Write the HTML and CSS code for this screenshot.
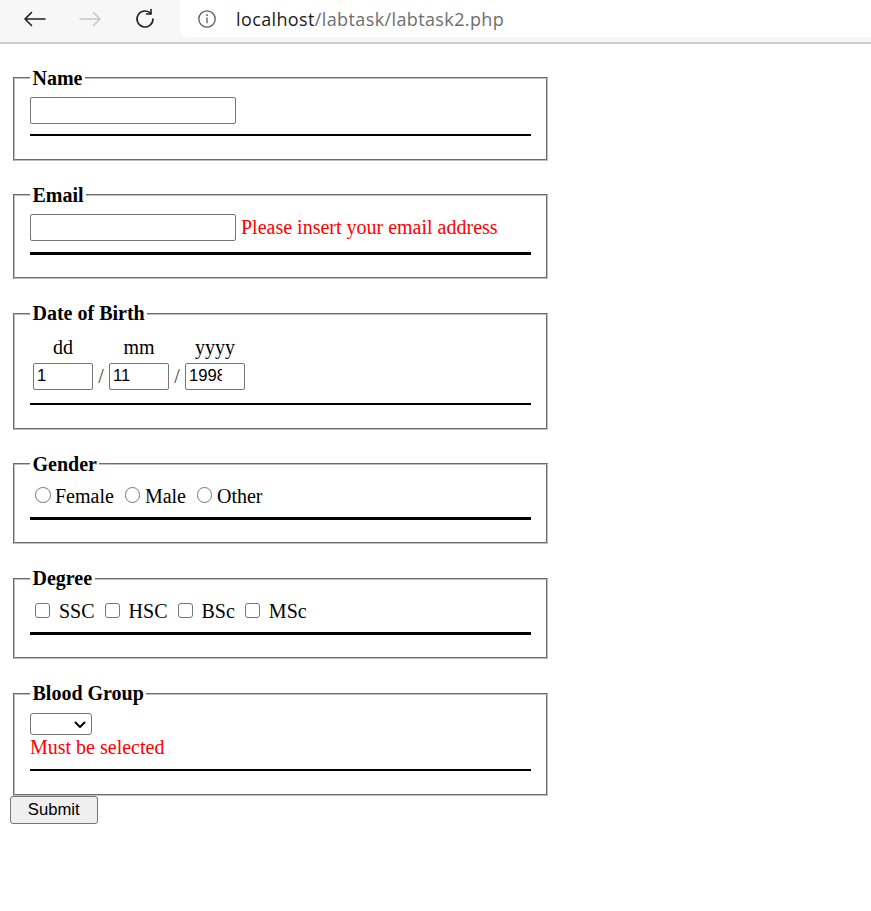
FILE: index.html
```html
<!DOCTYPE html>
<html lang="en">
<head>
<meta charset="utf-8">
<title>labtask2</title>
<link rel="stylesheet" href="styles.css">
</head>
<body>
<header class="browser-bar">
  <nav class="nav-buttons">
    <span class="nav-btn">
      <svg width="24" height="24" viewBox="0 0 24 24" class="icon icon-dark"><path d="M22 12H2M8.5 5.5L2 12l6.5 6.5"/></svg>
    </span>
    <span class="nav-btn">
      <svg width="24" height="24" viewBox="0 0 24 24" class="icon icon-light"><path d="M2 12h20M15.5 5.5L22 12l-6.5 6.5"/></svg>
    </span>
    <span class="nav-btn">
      <svg width="24" height="24" viewBox="0 0 24 24" class="icon icon-dark"><path d="M17.8 6.5A8 8 0 1 0 20 12"/><path d="M18 2.5V7h-4.5"/></svg>
    </span>
  </nav>
  <div class="address">
    <svg width="20" height="20" viewBox="0 0 20 20" class="info-icon"><circle cx="10" cy="10" r="8.2"/><path d="M10 8.6v5.6"/><circle cx="10" cy="6.2" r="0.9" class="info-dot"/></svg>
    <span class="url"><span class="url-host">localhost</span><span class="url-path">/labtask/labtask2.php</span></span>
  </div>
</header>

<main class="page">
  <form class="form" action="#" method="post">
    <fieldset class="group">
      <legend class="group-title">Name</legend>
      <div class="field-row">
        <input type="text" class="text-input" name="name">
      </div>
      <hr class="rule">
    </fieldset>

    <fieldset class="group">
      <legend class="group-title">Email</legend>
      <div class="field-row field-row-message">
        <input type="text" class="text-input" name="email">
        <span class="error">Please insert your email address</span>
      </div>
      <hr class="rule">
    </fieldset>

    <fieldset class="group">
      <legend class="group-title">Date of Birth</legend>
      <div class="dob">
        <span class="dob-label">dd</span>
        <span></span>
        <span class="dob-label">mm</span>
        <span></span>
        <span class="dob-label">yyyy</span>
        <input type="text" class="dob-input" value="1">
        <span class="dob-sep">/</span>
        <input type="text" class="dob-input" value="11">
        <span class="dob-sep">/</span>
        <input type="text" class="dob-input dob-year" value="1998">
      </div>
      <hr class="rule">
    </fieldset>

    <fieldset class="group">
      <legend class="group-title">Gender</legend>
      <div class="choices choices-radio">
        <label class="choice"><input type="radio" class="radio" name="gender">Female</label>
        <label class="choice"><input type="radio" class="radio" name="gender">Male</label>
        <label class="choice"><input type="radio" class="radio" name="gender">Other</label>
      </div>
      <hr class="rule">
    </fieldset>

    <fieldset class="group">
      <legend class="group-title">Degree</legend>
      <div class="choices">
        <label class="choice"><input type="checkbox" class="checkbox"> SSC</label>
        <label class="choice"><input type="checkbox" class="checkbox"> HSC</label>
        <label class="choice"><input type="checkbox" class="checkbox"> BSc</label>
        <label class="choice"><input type="checkbox" class="checkbox"> MSc</label>
      </div>
      <hr class="rule">
    </fieldset>

    <fieldset class="group group-last">
      <legend class="group-title">Blood Group</legend>
      <div class="select-wrap">
        <select class="select" name="blood">
          <option value=""></option>
        </select>
        <svg width="12" height="7" viewBox="0 0 12 7" class="select-arrow"><path d="M1 1l5 5 5-5"/></svg>
      </div>
      <div class="error">Must be selected</div>
      <hr class="rule">
    </fieldset>

    <button type="submit" class="submit">Submit</button>
  </form>
</main>
</body>
</html>
```

FILE: styles.css
```css
html, body {
  margin: 0;
  padding: 0;
  background: #ffffff;
}

body {
  font-family: "Liberation Serif", "Times New Roman", serif;
  font-size: 20px;
  color: #000000;
}

/* ---------- browser chrome ---------- */
.browser-bar {
  display: flex;
  align-items: flex-start;
  height: 42px;
  background: #f7f7f7;
  border-bottom: 2px solid #d0d0d0;
}

.nav-buttons {
  display: flex;
  gap: 31px;
  width: 180px;
  padding: 7px 0 0 23px;
  box-sizing: border-box;
}

.nav-btn {
  display: flex;
  width: 24px;
  height: 24px;
}

.icon {
  fill: none;
  stroke-width: 1.6;
  stroke-linecap: round;
  stroke-linejoin: round;
}

.icon-dark { stroke: #1f1f1f; }
.icon-light { stroke: #c6c6c6; }

.address {
  flex: 1;
  display: flex;
  align-items: center;
  height: 37px;
  background: #ffffff;
  border-bottom-left-radius: 8px;
  padding-left: 17px;
  gap: 19px;
}

.info-icon {
  fill: none;
  stroke: #5a5a5a;
  stroke-width: 1.3;
}

.info-dot {
  fill: #5a5a5a;
  stroke: none;
}

.url {
  font-family: "Open Sans", "Noto Sans", sans-serif;
  font-size: 18px;
  letter-spacing: 0.38px;
  white-space: nowrap;
}

.url-host { color: #1a1a1a; }
.url-path { color: #6e6e6e; }

/* ---------- page ---------- */
.page {
  padding: 22.5px 10px 0;
}

.form {
  margin: 0;
}

.group {
  box-sizing: border-box;
  width: 535px;
  min-width: 0;
  margin: 0 0 23px 3px;
  padding: 7px 15px 12.5px;
  border: 2px groove #c0c0c0;
}

.group-last {
  margin-bottom: 0;
}

.group-title {
  padding: 0 2.5px;
  font-weight: bold;
  font-size: 20px;
  line-height: 23px;
}

.rule {
  height: 2.5px;
  margin: 10px 0;
  border: 0;
  background: #000000;
}

.field-row {
  display: flex;
  align-items: center;
  gap: 5px;
  height: 27px;
}

.field-row-message {
  height: 28.5px;
  align-items: flex-start;
}

.field-row-message .error {
  margin-top: 2px;
}

.text-input,
.dob-input {
  box-sizing: border-box;
  border: 1px solid #767676;
  border-radius: 2px;
  background: #ffffff;
  color: #000000;
  font-family: "Liberation Sans", Arial, sans-serif;
  font-size: 16.67px;
  margin: 0;
  outline: none;
}

.text-input {
  width: 206px;
  height: 27px;
  padding: 1px 3px;
}

.error {
  color: #ff0000;
  line-height: 23px;
}

/* date of birth */
.dob {
  display: grid;
  grid-template-columns: 60px 6px 60px 6px 60px;
  column-gap: 5px;
  row-gap: 4px;
  justify-content: start;
  padding: 4px 0 3px 3px;
}

.dob-label {
  text-align: center;
  line-height: 23px;
}

.dob-input {
  width: 60px;
  height: 26.5px;
  padding: 1px 3px;
}

.dob-year {
  padding-right: 22px;
}

.dob-sep {
  align-self: center;
  text-align: center;
  line-height: 23px;
  color: #3a3a3a;
}

/* radios & checkboxes */
.choices {
  line-height: 22.5px;
}

.choices-radio {
  margin-left: -1px;
}

.radio,
.checkbox {
  -webkit-appearance: none;
  appearance: none;
  display: inline-block;
  box-sizing: border-box;
  width: 15px;
  height: 15px;
  border: 1px solid #767676;
  background: #ffffff;
  vertical-align: baseline;
}

.radio {
  border-radius: 50%;
  width: 15.5px;
  height: 15.5px;
  margin: 4.5px 4.5px 0 6px;
}

.checkbox {
  border-radius: 3px;
  margin: 5.5px 4px 0 5px;
}

/* select */
.select-wrap {
  position: relative;
  width: 62px;
  margin: 1px 0 0.5px;
}

.select {
  -webkit-appearance: none;
  appearance: none;
  display: block;
  box-sizing: border-box;
  width: 62px;
  height: 22px;
  margin: 0;
  border: 1px solid #767676;
  border-radius: 3px;
  background: #ffffff;
  font-family: "Liberation Sans", Arial, sans-serif;
  font-size: 16.67px;
}

.select-arrow {
  position: absolute;
  right: 6px;
  top: 8px;
  fill: none;
  stroke: #000000;
  stroke-width: 2;
  pointer-events: none;
}

/* submit */
.submit {
  display: block;
  box-sizing: border-box;
  width: 87.5px;
  height: 28px;
  margin: 0;
  padding: 0;
  border: 1px solid #767676;
  border-radius: 3px;
  background: #efefef;
  color: #000000;
  font-family: "Liberation Sans", Arial, sans-serif;
  font-size: 16.67px;
}
```
